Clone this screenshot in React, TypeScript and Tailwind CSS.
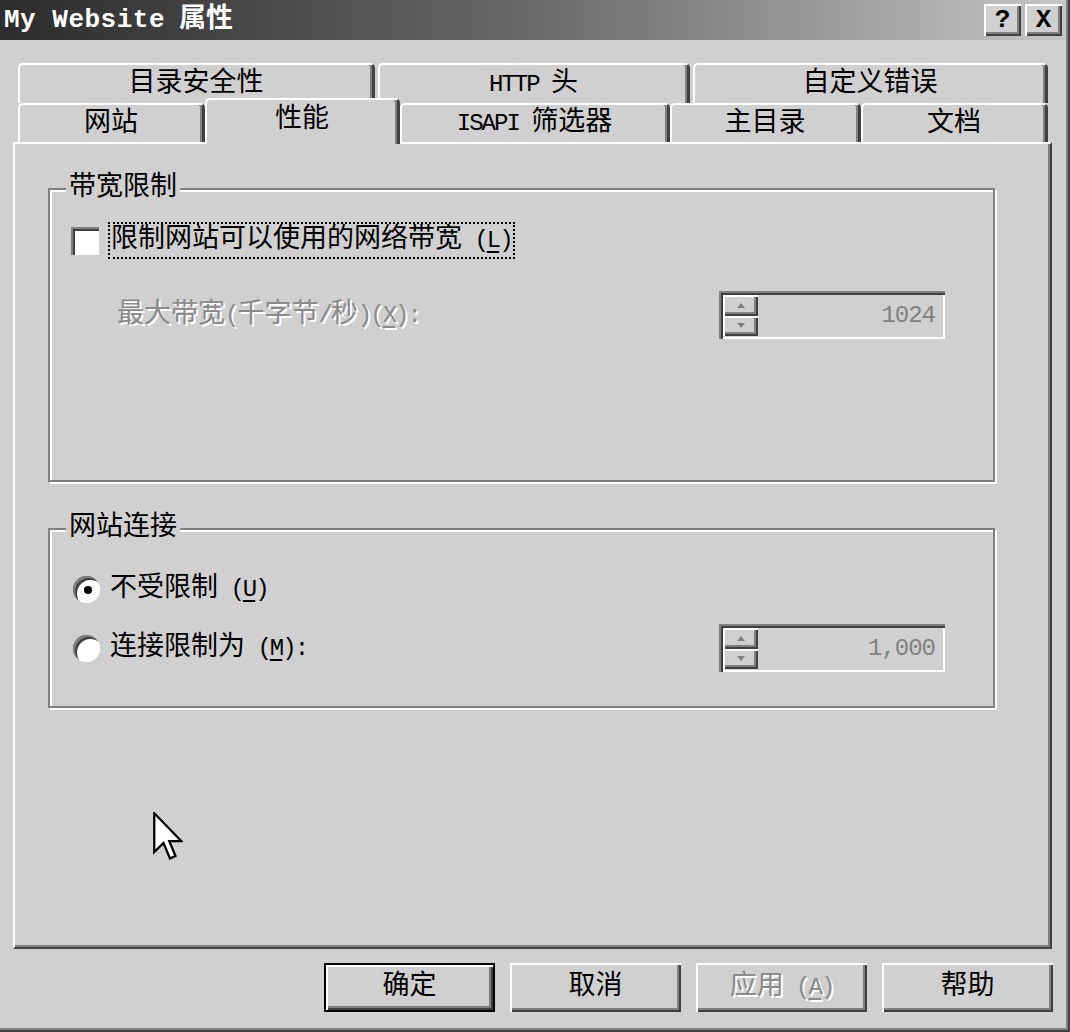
import React from 'react';

// Win2000 style bevels, greyscale
const RAISED = 'shadow-[inset_2px_2px_0_#ffffff,inset_-2px_-2px_0_#404040,inset_-4px_-4px_0_#808080]';
const SUNKEN = 'shadow-[inset_2px_2px_0_#808080,inset_4px_4px_0_#404040,inset_-2px_-2px_0_#ffffff]';
const DISABLED = 'text-[#8a8a8a] [text-shadow:2px_2px_0_#ffffff]';

// latin runs in the SimSun-ish look: narrow, tall
function L({ children }: { children: React.ReactNode }) {
  return <span className="whitespace-pre text-[24px] tracking-[-2px]">{children}</span>;
}

// " (X)" mnemonic with underlined letter
function Key({ k }: { k: string }) {
  return (
    <L>
      {' ('}
      <span className="underline underline-offset-[4px] decoration-2">{k}</span>)
    </L>
  );
}

interface TabProps {
  label: React.ReactNode;
  width: string;
  selected?: boolean;
  row?: 'back' | 'front';
}

function Tab({ label, width, selected, row = 'front' }: TabProps) {
  const height = row === 'back' ? 'h-[40px]' : selected ? 'relative z-10 h-[46px] -mb-[2px] pb-[4px] bg-[#d0d0d0]' : 'h-[39px]';
  return (
    <div
      className={`flex shrink-0 items-center justify-center rounded-t-[5px] border-t-2 border-l-2 border-t-white border-l-white border-r-[3px] border-r-[#404040] shadow-[inset_-2px_0_0_#808080] text-[27px] leading-[30px] ${height} ${width}`}
    >
      <span>{label}</span>
    </div>
  );
}

function SpinArrow({ up }: { up?: boolean }) {
  return (
    <div className={`flex flex-1 items-center justify-center bg-[#d0d0d0] ${RAISED}`}>
      <svg width="8" height="5" viewBox="0 0 8 5">
        {up ? <path d="M4 0 L8 5 L0 5 Z" fill="#808080" /> : <path d="M0 0 L8 0 L4 5 Z" fill="#808080" />}
      </svg>
    </div>
  );
}

function Spin({ value }: { value: string }) {
  return (
    <div className={`flex h-[48px] w-[226px] shrink-0 pt-[4px] pl-[4px] pb-[3px] pr-[2px] ${SUNKEN}`}>
      <div className="flex w-[35px] flex-col">
        <SpinArrow up />
        <SpinArrow />
      </div>
      <div className="flex flex-1 items-center justify-end pr-[8px] text-[24px] tracking-[-1px] text-[#808080]">{value}</div>
    </div>
  );
}

function Radio({ checked }: { checked?: boolean }) {
  return (
    <div className={`flex h-[27px] w-[27px] shrink-0 items-center justify-center rounded-full bg-white ${SUNKEN}`}>
      {checked && <div className="ml-[2px] mt-[2px] h-[8px] w-[8px] rounded-full bg-black" />}
    </div>
  );
}

function Group({ title, height, children }: { title: string; height: string; children: React.ReactNode }) {
  return (
    <div
      className={`relative w-[947px] border-2 border-[#808080] shadow-[inset_2px_2px_0_#ffffff,2px_2px_0_#ffffff] px-[21px] ${height}`}
    >
      <div className="absolute left-[16px] top-[-18px] bg-[#d0d0d0] px-[3px] text-[27px] leading-[32px]">{title}</div>
      {children}
    </div>
  );
}

function Button({ children, primary, disabled }: { children: React.ReactNode; primary?: boolean; disabled?: boolean }) {
  return (
    <div
      className={`flex h-[49px] w-[171px] items-center justify-center text-[27px] ${primary ? 'border-2 border-black' : ''} ${RAISED} ${disabled ? DISABLED : ''}`}
    >
      <span>{children}</span>
    </div>
  );
}

export default function App() {
  return (
    <div className="relative flex h-[1032px] w-[1070px] flex-col overflow-hidden bg-[#d0d0d0] font-['Liberation_Mono','Noto_Sans_CJK_SC',monospace] text-black shadow-[inset_-2px_-2px_0_#404040,inset_-4px_-4px_0_#808080]">
      {/* Title bar */}
      <div className="mr-[4px] flex h-[40px] items-center justify-between bg-gradient-to-r from-[#2c2c2c] via-[#6a6a6a] to-[#c6c6c6] pl-[4px] pr-[4px]">
        <div className="flex items-center text-white">
          <span className="text-[26px] font-bold tracking-[0.5px]">My Website</span>
          <span className="ml-[14px] text-[27px] font-bold">属性</span>
        </div>
        <div className="flex gap-[4px]">
          <div className={`flex h-[32px] w-[37px] items-center justify-center bg-[#d0d0d0] text-[26px] font-bold ${RAISED}`}>?</div>
          <div className={`flex h-[32px] w-[37px] items-center justify-center bg-[#d0d0d0] text-[26px] font-bold ${RAISED}`}>X</div>
        </div>
      </div>

      {/* Tabs */}
      <div className="pt-[23px]">
        <div className="ml-[18px] flex gap-[3px]">
          <Tab row="back" width="w-[357px]" label="目录安全性" />
          <Tab row="back" width="w-[312px]" label={<><L>HTTP </L>头</>} />
          <Tab row="back" width="w-[355px]" label="自定义错误" />
        </div>
        <div className="ml-[18px] -mt-[5px] flex h-[44px] items-end">
          <Tab width="w-[187px]" label="网站" />
          <Tab width="w-[195px]" label="性能" selected />
          <Tab width="w-[270px]" label={<><L>ISAPI </L>筛选器</>} />
          <Tab width="w-[191px]" label="主目录" />
          <Tab width="w-[187px]" label="文档" />
        </div>
      </div>

      {/* Property page */}
      <div className="ml-[13px] flex h-[807px] w-[1039px] flex-col gap-[46px] border-t-2 border-l-2 border-t-white border-l-white border-r-2 border-b-2 border-r-[#404040] border-b-[#404040] pl-[33px] pt-[44px] shadow-[inset_-2px_-2px_0_#808080]">
        <Group title="带宽限制" height="h-[294px]">
          <div className="flex items-center pt-[32px]">
            <div className={`h-[28px] w-[28px] bg-white ${SUNKEN}`} />
            <div className="ml-[9px] border-2 border-dotted border-black px-[1px] text-[27px] leading-[32px]">
              限制网站可以使用的网络带宽<Key k="L" />
            </div>
          </div>
          <div className="mt-[32px] flex items-center justify-between">
            <div className={`pl-[46px] text-[27px] ${DISABLED}`}>
              最大带宽<L>(</L>千字节<L>/</L>秒<L>)</L>
              <L>(<span className="underline underline-offset-[4px]">X</span>):</L>
            </div>
            <div className="mr-[27px]">
              <Spin value="1024" />
            </div>
          </div>
        </Group>

        <Group title="网站连接" height="h-[180px]">
          <div className="mt-[40px] flex h-[36px] items-center pt-[2px]">
            <div className="ml-[2px]"><Radio checked /></div>
            <div className="ml-[10px] text-[27px]">不受限制<Key k="U" /></div>
          </div>
          <div className="mt-[18px] flex h-[48px] items-center justify-between">
            <div className="flex items-center">
              <div className="ml-[2px]"><Radio /></div>
              <div className="ml-[10px] text-[27px]">
                连接限制为<Key k="M" /><L>:</L>
              </div>
            </div>
            <div className="mr-[27px]">
              <Spin value="1,000" />
            </div>
          </div>
        </Group>
      </div>

      {/* Dialog buttons */}
      <div className="mt-[14px] flex justify-end gap-[15px] pr-[17px]">
        <Button primary>确定</Button>
        <Button>取消</Button>
        <Button disabled>
          应用<Key k="A" />
        </Button>
        <Button>帮助</Button>
      </div>

      {/* Mouse pointer */}
      <svg className="absolute left-[153px] top-[812px]" width="30" height="50" viewBox="0 0 12 20">
        <path d="M0.5 0.5 L0.5 16 L4.2 12.4 L6.8 18.6 L9 17.6 L6.5 11.6 L11.3 11.6 Z" fill="#ffffff" stroke="#000000" strokeWidth="0.9" strokeLinejoin="miter" />
      </svg>
    </div>
  );
}
